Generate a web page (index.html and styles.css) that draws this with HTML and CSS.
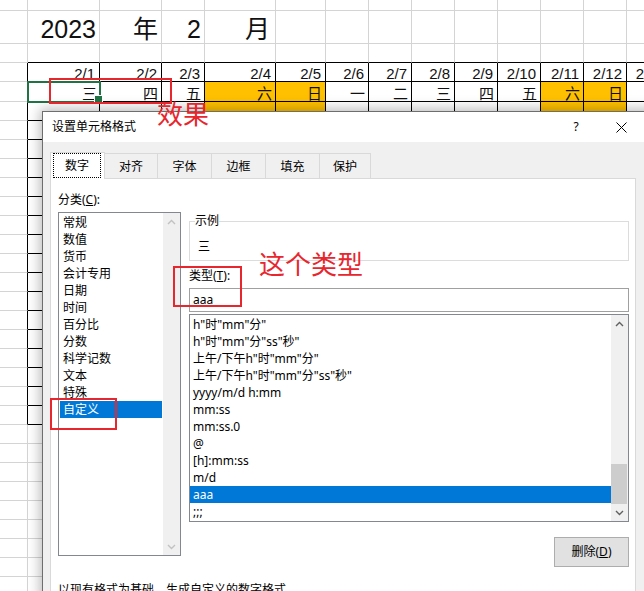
FILE: index.html
```html
<!DOCTYPE html>
<html lang="zh-CN">
<head>
<meta charset="utf-8">
<title>设置单元格格式</title>
<link rel="stylesheet" href="styles.css">
</head>
<body>
<div class="sheet">
  <div class="row r0"><div class="c"></div><div class="c"></div><div class="c"></div><div class="c"></div><div class="c"></div><div class="c"></div><div class="c"></div><div class="c"></div><div class="c"></div><div class="c"></div><div class="c"></div><div class="c"></div><div class="c"></div><div class="c"></div></div>
  <div class="row r1"><div class="c"></div><div class="c">2023</div><div class="c">年</div><div class="c">2</div><div class="c yue">月</div><div class="c"></div><div class="c"></div><div class="c"></div><div class="c"></div><div class="c"></div><div class="c"></div><div class="c"></div><div class="c"></div><div class="c"></div></div>
  <div class="row top"><div class="c"></div><div class="c"></div><div class="c"></div><div class="c"></div><div class="c"></div><div class="c"></div><div class="c"></div><div class="c"></div><div class="c"></div><div class="c"></div><div class="c"></div><div class="c"></div><div class="c"></div><div class="c"></div></div>
  <div class="row blk"><div class="c"></div><div class="c">2/1</div><div class="c">2/2</div><div class="c">2/3</div><div class="c">2/4</div><div class="c">2/5</div><div class="c">2/6</div><div class="c">2/7</div><div class="c">2/8</div><div class="c">2/9</div><div class="c">2/10</div><div class="c">2/11</div><div class="c">2/12</div><div class="c">2/13</div></div>
  <div class="row blk wk r4"><div class="c"></div><div class="c cur">三<i class="sel"></i></div><div class="c">四</div><div class="c">五</div><div class="c y">六</div><div class="c y">日</div><div class="c">一</div><div class="c">二</div><div class="c">三</div><div class="c">四</div><div class="c">五</div><div class="c y">六</div><div class="c y">日</div><div class="c">一</div></div>
  <div class="row blk"><div class="c"></div><div class="c"></div><div class="c"></div><div class="c"></div><div class="c y"></div><div class="c y"></div><div class="c"></div><div class="c"></div><div class="c"></div><div class="c"></div><div class="c"></div><div class="c y"></div><div class="c y"></div><div class="c"></div></div>
  <div class="row blk"><div class="c"></div><div class="c"></div></div>
  <div class="row blk"><div class="c"></div><div class="c"></div></div>
  <div class="row blk"><div class="c"></div><div class="c"></div></div>
  <div class="row blk"><div class="c"></div><div class="c"></div></div>
  <div class="row blk"><div class="c"></div><div class="c"></div></div>
  <div class="row blk"><div class="c"></div><div class="c"></div></div>
  <div class="row blk"><div class="c"></div><div class="c"></div></div>
  <div class="row blk"><div class="c"></div><div class="c"></div></div>
  <div class="row blk"><div class="c"></div><div class="c"></div></div>
  <div class="row blk"><div class="c"></div><div class="c"></div></div>
  <div class="row blk"><div class="c"></div><div class="c"></div></div>
  <div class="row blk"><div class="c"></div><div class="c"></div></div>
  <div class="row blk"><div class="c"></div><div class="c"></div></div>
  <div class="row blk"><div class="c"></div><div class="c"></div></div>
  <div class="row blk"><div class="c"></div><div class="c"></div></div>
  <div class="row blk"><div class="c"></div><div class="c"></div></div>
  <div class="row"><div class="c"></div><div class="c"></div></div>
  <div class="row"><div class="c"></div><div class="c"></div></div>
  <div class="row"><div class="c"></div><div class="c"></div></div>
  <div class="row"><div class="c"></div><div class="c"></div></div>
  <div class="row"><div class="c"></div><div class="c"></div></div>
  <div class="row"><div class="c"></div><div class="c"></div></div>
  <div class="row"><div class="c"></div><div class="c"></div></div>
  <div class="row"><div class="c"></div><div class="c"></div></div>
  <div class="row"><div class="c"></div><div class="c"></div></div>
</div>

<div class="dialog">
  <div class="titlebar">
    <span class="title">设置单元格格式</span>
    <span class="help">?</span>
    <span class="close"><svg width="11" height="11" viewBox="0 0 11 11"><path d="M0.5 0.5 L10.5 10.5 M10.5 0.5 L0.5 10.5" stroke="#000" stroke-width="1" fill="none"/></svg></span>
  </div>
  <div class="dbody">
    <div class="tabs">
      <div class="tab on"><span class="focus">数字</span></div>
      <div class="tab">对齐</div>
      <div class="tab">字体</div>
      <div class="tab">边框</div>
      <div class="tab">填充</div>
      <div class="tab last">保护</div>
    </div>
    <div class="panel">
      <div class="cols">
        <div class="left">
          <div class="lbl">分类(<u>C</u>):</div>
          <div class="listbox catlist">
            <div class="items">
              <div class="item">常规</div>
              <div class="item">数值</div>
              <div class="item">货币</div>
              <div class="item">会计专用</div>
              <div class="item">日期</div>
              <div class="item">时间</div>
              <div class="item">百分比</div>
              <div class="item">分数</div>
              <div class="item">科学记数</div>
              <div class="item">文本</div>
              <div class="item">特殊</div>
              <div class="item hl">自定义</div>
            </div>
            <div class="vbar off">
              <div class="arrow"><svg width="9" height="6" viewBox="0 0 9 6"><path d="M1 5 L4.5 1.5 L8 5" fill="none" stroke="currentColor" stroke-width="1.4"/></svg></div>
              <div class="arrow end"><svg width="9" height="6" viewBox="0 0 9 6"><path d="M1 1 L4.5 4.5 L8 1" fill="none" stroke="currentColor" stroke-width="1.4"/></svg></div>
            </div>
          </div>
        </div>
        <div class="right">
          <div class="group">
            <div class="legend">示例</div>
            <div class="sample">三</div>
          </div>
          <div class="lbl tlbl">类型(<u>T</u>):</div>
          <div class="input">aaa</div>
          <div class="listbox typelist">
            <div class="items">
              <div class="item">h"时"mm"分"</div>
              <div class="item">h"时"mm"分"ss"秒"</div>
              <div class="item">上午/下午h"时"mm"分"</div>
              <div class="item">上午/下午h"时"mm"分"ss"秒"</div>
              <div class="item">yyyy/m/d h:mm</div>
              <div class="item">mm:ss</div>
              <div class="item">mm:ss.0</div>
              <div class="item">@</div>
              <div class="item">[h]:mm:ss</div>
              <div class="item">m/d</div>
              <div class="item hl">aaa</div>
              <div class="item">;;;</div>
            </div>
            <div class="vbar">
              <div class="arrow"><svg width="9" height="6" viewBox="0 0 9 6"><path d="M1 5 L4.5 1.5 L8 5" fill="none" stroke="currentColor" stroke-width="1.4"/></svg></div>
              <div class="thumb"></div>
              <div class="arrow"><svg width="9" height="6" viewBox="0 0 9 6"><path d="M1 1 L4.5 4.5 L8 1" fill="none" stroke="currentColor" stroke-width="1.4"/></svg></div>
            </div>
          </div>
          <div class="btn">删除(<u>D</u>)</div>
        </div>
      </div>
      <div class="hint">以现有格式为基础，生成自定义的数字格式。</div>
    </div>
  </div>
</div>

<div class="mark m1"></div>
<div class="mark m2"></div>
<div class="mark m3"></div>
<div class="note n1">效果</div>
<div class="note n2">这个类型</div>
</body>
</html>
```

FILE: styles.css
```css
* { box-sizing: border-box; }
html, body { margin: 0; padding: 0; }
body {
  width: 644px;
  height: 591px;
  overflow: hidden;
  position: relative;
  background: #fff;
  color: #000;
  font-family: "Liberation Sans", "Noto Sans CJK SC", sans-serif;
}

/* ---------- spreadsheet ---------- */
.sheet { display: flex; flex-direction: column; width: 670px; }
.row {
  display: grid;
  grid-template-columns: 28px 72px 62px 43px 71px 50px repeat(8, 43px);
  height: 19px;
  flex: none;
}
.r0 { height: 11px; }
.r1 { height: 33px; }
.r4 { height: 20px; }
.c {
  border-right: 1px solid #d4d4d4;
  border-bottom: 1px solid #d4d4d4;
  display: flex;
  justify-content: flex-end;
  align-items: flex-end;
  padding-right: 4px;
  font-size: 15px;
  line-height: 14px;
  white-space: nowrap;
  color: #111;
}
.r1 .c { font-size: 25px; line-height: 27px; padding-right: 3px; }
.r1 .yue { padding-right: 5px; }
.wk .c { padding-right: 3px; }
.wk .cur { padding-right: 2px; }
.top > .c + .c { border-bottom-color: #000; }
.blk > .c:first-child { border-right-color: #000; }
.blk > .c + .c { border-color: #000; }
.y { background: #ffc000; }
.cur { position: relative; }
.sel {
  position: absolute;
  left: -1px;
  top: -1px;
  width: 74px;
  height: 22px;
  border: 2px solid #217346;
}
.sel::after {
  content: "";
  position: absolute;
  right: -4px;
  bottom: -3px;
  width: 7px;
  height: 7px;
  background: #217346;
  border: 1px solid #fff;
}

/* ---------- dialog ---------- */
.dialog {
  position: absolute;
  left: 42px;
  top: 111px;
  width: 640px;
  height: 490px;
  background: #f0f0f0;
  border: 1px solid #6e6e6e;
  box-shadow: 0 0 12px 2px rgba(0, 0, 0, 0.28);
  font-family: "Noto Sans", "Noto Sans CJK SC", sans-serif;
  font-size: 12px;
  line-height: 16px;
  color: #000;
}
.titlebar {
  height: 30px;
  background: #fff;
  display: flex;
  align-items: center;
  padding-left: 9px;
}
.help { margin-left: auto; width: 20px; text-align: center; }
.close {
  width: 24px;
  height: 30px;
  margin-left: 23px;
  margin-right: 48px;
  display: flex;
  align-items: center;
  justify-content: center;
}
.dbody { padding: 10px 0 0 7px; }
.tabs { display: flex; align-items: flex-end; height: 26px; }
.tab {
  width: 55px;
  height: 25px;
  margin-left: -1px;
  border: 1px solid #d9d9d9;
  border-bottom: none;
  background: #f0f0f0;
  display: flex;
  align-items: center;
  justify-content: center;
  padding-top: 2px;
}
.tab:nth-child(2) { width: 54px; }
.tab.last { width: 52px; }
.tab.on {
  height: 27px;
  margin-left: 0;
  margin-bottom: -1px;
  background: #fff;
  position: relative;
  z-index: 1;
  padding: 0 3px 1px 2px;
  align-items: stretch;
}
.focus {
  flex: 1;
  border: 1px dotted #000;
  display: flex;
  align-items: center;
  justify-content: center;
  padding-top: 1px;
}
.panel {
  width: 586px;
  height: 420px;
  background: #fff;
  border: 1px solid #d9d9d9;
  padding: 13px 0 0 7px;
}
.cols { display: flex; gap: 8px; align-items: flex-start; }
.left { width: 123px; display: flex; flex-direction: column; }
.right { width: 440px; display: flex; flex-direction: column; }
.lbl { line-height: 16px; }
.listbox { border: 1px solid #828790; display: flex; overflow: hidden; }
.catlist { margin-top: 4px; height: 344px; }
.items { flex: 1; min-width: 0; padding: 1px 1px 0; }
.typelist .items { padding: 1px 0 0; }
.item { height: 17px; line-height: 17px; padding-left: 3px; white-space: nowrap; }
.item.hl { background: #0078d7; color: #fff; }
.vbar {
  width: 17px;
  flex: none;
  background: #f0f0f0;
  display: flex;
  flex-direction: column;
  color: #606060;
}
.vbar.off { color: #c2c2c2; }
.arrow { height: 17px; flex: none; display: flex; align-items: center; justify-content: center; }
.arrow.end { margin-top: auto; }
.thumb { height: 40px; margin: auto 1px 0 0; background: #cdcdcd; }
.group {
  margin-top: 29px;
  border: 1px solid #dcdcdc;
  padding: 0 0 5px 8px;
}
.legend {
  margin: -9px 0 0 -3px;
  width: fit-content;
  background: #fff;
  line-height: 16px;
}
.sample { margin-top: 10px; line-height: 16px; }
.tlbl { margin-top: 7px; }
.input {
  margin-top: 4px;
  height: 24px;
  border: 1px solid #a0a0a0;
  padding-left: 3px;
  line-height: 22px;
}
.typelist { margin-top: 2px; height: 208px; }
.btn {
  margin-top: 15px;
  align-self: flex-end;
  width: 75px;
  height: 30px;
  background: #e1e1e1;
  border: 1px solid #adadad;
  display: flex;
  align-items: center;
  justify-content: center;
}
.hint { margin-top: 15px; line-height: 16px; }

/* ---------- annotations ---------- */
.mark { position: absolute; border: 2px solid #e8262e; }
.m1 { left: 49px; top: 78px; width: 123px; height: 26px; }
.m2 { left: 173px; top: 266px; width: 69px; height: 41px; }
.m3 { left: 50px; top: 398px; width: 67px; height: 32px; }
.note {
  position: absolute;
  color: #e8262e;
  font-family: "Noto Sans CJK SC", sans-serif;
  font-size: 26px;
  line-height: 26px;
  white-space: nowrap;
}
.n1 { left: 157px; top: 100px; }
.n2 { left: 259px; top: 250px; }
```
